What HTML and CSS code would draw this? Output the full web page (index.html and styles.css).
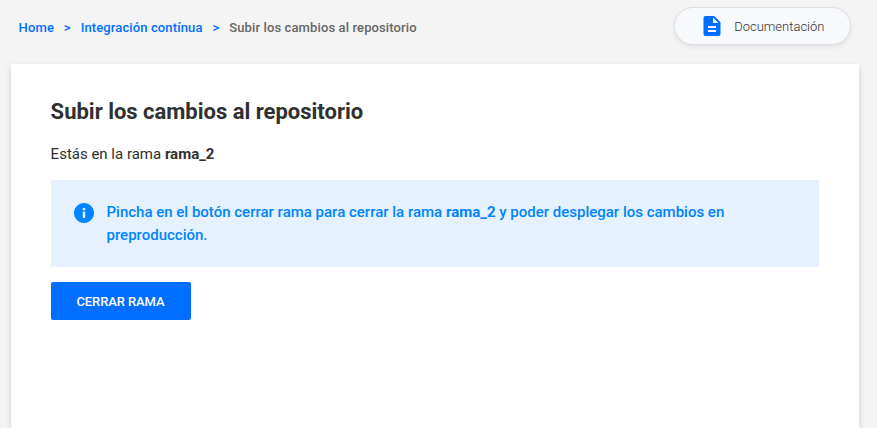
FILE: index.html
```html
<!DOCTYPE html>
<html lang="es">
<head>
<meta charset="utf-8">
<title>Subir los cambios al repositorio</title>
<link rel="stylesheet" href="styles.css">
</head>
<body>
<header class="topbar">
  <nav class="breadcrumb">
    <a href="#">Home</a><span class="sep">&gt;</span><a href="#">Integración contínua</a><span class="sep">&gt;</span><span class="current">Subir los cambios al repositorio</span>
  </nav>
  <a class="docs" href="#">
    <svg class="docs-icon" viewBox="0 0 24 24"><path d="M14 2H5.500Q3.500 2 3.500 4v16q0 2 2 2h13q2 0 2-2V8.200L14.200 2zm2 16H8v-2h8v2zm0-4H8v-2h8v2zm-3-5V3.500L18.500 9H13z"/></svg>
    <span>Documentación</span>
  </a>
</header>
<main class="card">
  <h1>Subir los cambios al repositorio</h1>
  <p class="branch">Estás en la rama <b>rama_2</b></p>
  <div class="notice">
    <svg class="notice-icon" viewBox="0 0 24 24"><path d="M12 2C6.480 2 2 6.480 2 12s4.480 10 10 10 10-4.480 10-10S17.520 2 12 2zm1.200 15h-2.400v-6.500h2.400V17zm0-7.800h-2.400V7h2.400v2.200z"/></svg>
    <p>Pincha en el botón cerrar rama para cerrar la rama <b>rama_2</b> y poder desplegar los cambios en preproducción.</p>
  </div>
  <button class="close-branch" type="button">CERRAR RAMA</button>
</main>
</body>
</html>
```

FILE: styles.css
```css
* { box-sizing: border-box; }
body {
  display: flex;
  flex-direction: column;
  margin: 0;
  height: 100vh;
  background: #f4f4f4;
  color: #303030;
  font-family: Roboto, sans-serif;
}
a { text-decoration: none; color: #006eff; }
.topbar {
  display: flex;
  flex: none;
  justify-content: space-between;
  height: 64px;
  padding: 7px 26px 0 18.600px;
}
.breadcrumb {
  display: flex;
  height: 40px;
  align-items: center;
  font-size: 13px;
  font-weight: 500;
  letter-spacing: .12px;
  white-space: nowrap;
}
.breadcrumb .sep { margin: 0 9.900px; color: #006eff; }
.breadcrumb .current { color: #666; }
.docs {
  display: flex;
  align-items: center;
  width: 177px;
  height: 38px;
  padding-left: 25px;
  gap: 10.200px;
  border: 1px solid #dce0e6;
  border-radius: 19px;
  background: #f8f9fb;
  box-shadow: 0 2px 5px rgba(0, 0, 0, .08);
  color: #333;
  font-size: 13px;
  font-weight: 300;
}
.docs-icon { width: 24px; height: 24px; margin-top: -1px; fill: #006eff; }
.card {
  flex: 1;
  width: 848px;
  margin-left: 11px;
  padding: 32px 40px 0;
  background: #fff;
  box-shadow: 0 3px 6px rgba(0, 0, 0, .16);
  clip-path: inset(-8px -10px 0 -10px);
}
h1 { margin: 0 0 0 -.4px; font-size: 22px; line-height: 32px; font-weight: 700; letter-spacing: -.01px; }
.branch { margin: 14px 0 14px -.4px; font-size: 15px; line-height: 24px; }
.notice {
  display: flex;
  height: 87px;
  padding: 21px 20.500px;
  gap: 11px;
  background: #e5f1fe;
  color: #0084ff;
  font-size: 15px;
  line-height: 23px;
  font-weight: 500;
}
.notice p { margin: 0; width: 650px; }
.notice b { font-weight: 700; }
.notice-icon { flex: none; width: 24px; height: 24px; fill: #0084ff; }
.close-branch {
  display: block;
  width: 140px;
  height: 38px;
  margin-top: 15px;
  padding: 0 1px 0 0;
  border: 0;
  border-radius: 2px;
  background: #006eff;
  color: #fff;
  font: 500 13px Roboto, sans-serif;
  letter-spacing: -.1px;
}
```
